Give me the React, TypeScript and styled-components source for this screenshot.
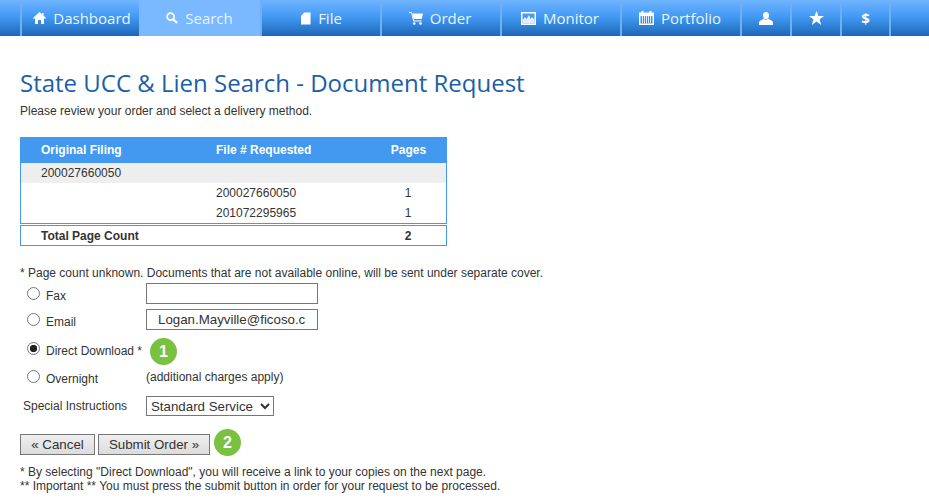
import { ReactNode } from "react";
import styled, { createGlobalStyle } from "styled-components";

const GlobalStyle = createGlobalStyle`
  html, body {
    margin: 0;
    padding: 0;
    background: #fff;
    font-family: "Liberation Sans", Arial, sans-serif;
    font-size: 12px;
    color: #333;
  }
`;

const NavBar = styled.nav`
  display: flex;
  height: 36px;
  padding-left: 20px;
  background: linear-gradient(#6fb4ff 0%, #449af5 45%, #1c68b6 100%);
`;

const NavItem = styled.div<{ $w: number; $pad?: number; $active?: boolean; $text?: boolean }>`
  width: ${p => p.$w}px;
  box-sizing: border-box;
  display: flex;
  align-items: center;
  justify-content: center;
  gap: 7px;
  padding-left: ${p => p.$pad ?? 0}px;
  padding-right: ${p => (p.$text ? 2 : 0)}px;
  border-left: 2px solid ${p => (p.$active ? "#7ab8ff" : "#6fb0f5")};
  background: ${p => (p.$active ? "#7ab8ff" : "transparent")};
  color: ${p => (p.$active ? "#e8f3ff" : "#eaf4ff")};
  font-family: "Open Sans", sans-serif;
  font-size: 15px;
`;

const DollarGlyph = styled.span`
  font-weight: 700;
  font-size: 15px;
  color: #fff;
`;

const Content = styled.main`
  padding: 34px 0 0 20px;
`;

const Title = styled.h1`
  margin: 0;
  font-family: "Open Sans", sans-serif;
  font-weight: 400;
  font-size: 24px;
  line-height: 26px;
  color: #1a5fa8;
`;

const Intro = styled.p`
  margin: 8px 0 0;
  line-height: 14px;
`;

const Table = styled.div`
  margin-top: 19px;
  width: 427px;
`;

const TableBody = styled.div`
  border: 1px solid #4398ef;
  border-top: none;
`;

const Row = styled.div<{ $h?: number; $bg?: string; $color?: string; $bold?: boolean }>`
  display: grid;
  grid-template-columns: 195px 160px 1fr;
  align-items: center;
  height: ${p => p.$h ?? 20}px;
  background: ${p => p.$bg ?? "transparent"};
  color: ${p => p.$color ?? "#333"};
  font-weight: ${p => (p.$bold ? 700 : 400)};
`;

const HeadRow = styled(Row)`
  box-sizing: border-box;
  padding-left: 1px;
`;

const Cell = styled.div`
  padding-left: 20px;
  &:nth-child(2) {
    padding-left: 0;
  }
`;

const PagesCell = styled.div`
  padding-right: 6px;
  text-align: center;
`;

const TotalBox = styled.div`
  margin-top: 1px;
  border: 1px solid #4398ef;
`;

const Note = styled.p`
  margin: 20px 0 0;
  line-height: 14px;
`;

const Options = styled.div`
  margin-top: 2px;
`;

const OptionRow = styled.div<{ $h: number }>`
  display: flex;
  align-items: center;
  height: ${p => p.$h}px;
`;

const OptionLabel = styled.label`
  display: flex;
  align-items: center;
  width: 126px;
  flex-shrink: 0;
  padding: 2px 0 0 7px;
  box-sizing: border-box;
`;

const Radio = styled.input.attrs({ type: "radio" })`
  appearance: none;
  width: 13px;
  height: 13px;
  margin: -5px 6px 0 0;
  border: 1px solid #767676;
  border-radius: 50%;
  background: #fff;
  &:checked {
    background: radial-gradient(circle, #222 0 3.4px, #fff 4px);
  }
`;

const TextField = styled.input`
  width: 172px;
  height: 21px;
  margin-top: -3px;
  box-sizing: border-box;
  border: 1px solid #767676;
  padding: 0 12px 0 11px;
  font-family: "Liberation Sans", Arial, sans-serif;
  font-size: 13.3px;
  color: #333;
`;

const ChargesNote = styled.span`
  margin-top: -2px;
`;

const Step = styled.span`
  display: inline-flex;
  align-items: center;
  justify-content: center;
  width: 27px;
  height: 27px;
  border-radius: 50%;
  background: #7ac142;
  color: #fff;
  font-weight: 700;
  font-size: 16px;
`;

const DirectStep = styled(Step)`
  margin: 3px 0 0 4px;
`;

const SubmitStep = styled(Step)`
  margin: -4px 0 0 1px;
`;

const InstructionsRow = styled.div`
  display: flex;
  align-items: center;
  height: 20px;
  margin-top: 6px;
  padding-left: 3px;
`;

const InstructionsLabel = styled.span`
  width: 123px;
`;

const ServiceSelect = styled.select`
  width: 128px;
  height: 20px;
  padding: 0;
  font-family: "Liberation Sans", Arial, sans-serif;
  font-size: 13.3px;
  color: #333;
  background: #fff;
  border: 1px solid #767676;
`;

const Actions = styled.div`
  display: flex;
  align-items: center;
  gap: 3px;
  height: 21px;
  margin-top: 18px;
`;

const Button = styled.button<{ $w: number }>`
  width: ${p => p.$w}px;
  height: 21px;
  box-sizing: border-box;
  padding: 0;
  border: 1px solid #767676;
  background: linear-gradient(#efefef, #dcdcdc);
  font-family: "Liberation Sans", Arial, sans-serif;
  font-size: 13.3px;
  color: #333;
`;

const Footnotes = styled.p`
  margin: 10px 0 0;
  line-height: 14px;
`;

const HomeIcon = () => (
  <svg width="13" height="12" viewBox="0 0 13 12">
    <path fill="#fff" d="M6.5 0L0 6l.9 1 1.1-1v6h3V8h3v4h3V6l1.1 1 .9-1-2.4-2.2V1H9v1.2z" />
  </svg>
);

const SearchIcon = () => (
  <svg width="12" height="12" viewBox="0 0 13 13">
    <circle cx="5" cy="5" r="3.8" fill="none" stroke="#fff" strokeWidth="1.8" />
    <path stroke="#fff" strokeWidth="2.2" d="M7.8 7.8l4.2 4.2" />
  </svg>
);

const FileIcon = () => (
  <svg width="10" height="13" viewBox="0 0 11 13">
    <path fill="#fff" d="M3.5 0H10.5V13H0V3.5z" />
  </svg>
);

const CartIcon = () => (
  <svg width="14" height="13" viewBox="0 0 14 13">
    <path fill="#fff" d="M3.5 1.5H14L12.7 7H4.6z" />
    <path fill="none" stroke="#fff" d="M0 .5h2.6l2 8.5h8" />
    <circle cx="5.2" cy="11.5" r="1.3" fill="#fff" />
    <circle cx="11.5" cy="11.5" r="1.3" fill="#fff" />
  </svg>
);

const MonitorIcon = () => (
  <svg width="15" height="13" viewBox="0 0 15 13">
    <path fill="#fff" fillRule="evenodd" d="M0 0h15v13H0zM1.5 1.5v10h12v-10z" />
    <path fill="#fff" d="M1.5 8L4 5l1.5 2L8 3l1.5 4 1.5-2 2.5 2.5v4h-12z" opacity=".85" />
  </svg>
);

const CalendarIcon = () => (
  <svg width="15" height="14" viewBox="0 0 15 14">
    <path fill="#fff" fillRule="evenodd" d="M0 1.5h2.5V0h2v1.5h6V0h2v1.5H15V14H0zM1.5 5v7.5h12V5z" />
    <path stroke="#fff" strokeOpacity=".8" d="M3.5 5v7.5M5.5 5v7.5M7.5 5v7.5M9.5 5v7.5M11.5 5v7.5" />
  </svg>
);

const UserIcon = () => (
  <svg width="14" height="13" viewBox="0 0 14 13">
    <ellipse cx="7" cy="3.6" rx="3" ry="3.6" fill="#fff" />
    <path fill="#fff" d="M4.8 6.8C3 8 .6 8.2 0 10.2V13h14v-2.8c-.6-2-3-2.2-4.8-3.4C8 8 6 8 4.8 6.8z" />
  </svg>
);

const StarIcon = () => (
  <svg width="15" height="14" viewBox="0 0 15 14">
    <path fill="#fff" d="M7.5 0l2 5h5.5l-4.4 3.3L12.2 14 7.5 10.6 2.8 14l1.6-5.7L0 5h5.5z" />
  </svg>
);

const navItems: { w: number; pad?: number; icon?: ReactNode; label?: string; active?: boolean }[] = [
  { w: 119, pad: 5, icon: <HomeIcon />, label: "Dashboard" },
  { w: 121, icon: <SearchIcon />, label: "Search", active: true },
  { w: 120, pad: 3, icon: <FileIcon />, label: "File" },
  { w: 120, icon: <CartIcon />, label: "Order" },
  { w: 120, icon: <MonitorIcon />, label: "Monitor" },
  { w: 120, icon: <CalendarIcon />, label: "Portfolio" },
  { w: 50, icon: <UserIcon /> },
  { w: 50, icon: <StarIcon /> },
  { w: 49, icon: <DollarGlyph>$</DollarGlyph> },
  { w: 40 },
];

export default function App() {
  return (
    <>
      <GlobalStyle />
      <NavBar>
        {navItems.map((item, i) => (
          <NavItem key={i} $w={item.w} $pad={item.pad} $active={item.active} $text={!!item.label}>
            {item.icon}
            {item.label && <span>{item.label}</span>}
          </NavItem>
        ))}
      </NavBar>
      <Content>
        <Title>State UCC &amp; Lien Search - Document Request</Title>
        <Intro>Please review your order and select a delivery method.</Intro>
        <Table>
          <HeadRow $h={26} $bg="#4398ef" $color="#fff" $bold>
            <Cell>Original Filing</Cell>
            <Cell>File # Requested</Cell>
            <PagesCell>Pages</PagesCell>
          </HeadRow>
          <TableBody>
            <Row $bg="#eeeeee">
              <Cell>200027660050</Cell>
            </Row>
            <Row>
              <Cell />
              <Cell>200027660050</Cell>
              <PagesCell>1</PagesCell>
            </Row>
            <Row>
              <Cell />
              <Cell>201072295965</Cell>
              <PagesCell>1</PagesCell>
            </Row>
          </TableBody>
          <TotalBox>
            <Row $h={19} $bold>
              <Cell>Total Page Count</Cell>
              <Cell />
              <PagesCell>2</PagesCell>
            </Row>
          </TotalBox>
        </Table>
        <Note>* Page count unknown. Documents that are not available online, will be sent under separate cover.</Note>
        <Options>
          <OptionRow $h={26}>
            <OptionLabel>
              <Radio name="delivery" />
              Fax
            </OptionLabel>
            <TextField />
          </OptionRow>
          <OptionRow $h={26}>
            <OptionLabel>
              <Radio name="delivery" />
              Email
            </OptionLabel>
            <TextField defaultValue="Logan.Mayville@ficoso.com" />
          </OptionRow>
          <OptionRow $h={32}>
            <OptionLabel>
              <Radio name="delivery" defaultChecked />
              Direct Download *
            </OptionLabel>
            <DirectStep>1</DirectStep>
          </OptionRow>
          <OptionRow $h={24}>
            <OptionLabel>
              <Radio name="delivery" />
              Overnight
            </OptionLabel>
            <ChargesNote>(additional charges apply)</ChargesNote>
          </OptionRow>
        </Options>
        <InstructionsRow>
          <InstructionsLabel>Special Instructions</InstructionsLabel>
          <ServiceSelect defaultValue="Standard Service">
            <option>Standard Service</option>
          </ServiceSelect>
        </InstructionsRow>
        <Actions>
          <Button $w={75}>« Cancel</Button>
          <Button $w={112}>Submit Order »</Button>
          <SubmitStep>2</SubmitStep>
        </Actions>
        <Footnotes>
          * By selecting "Direct Download", you will receive a link to your copies on the next page.
          <br />
          ** Important ** You must press the submit button in order for your request to be processed.
        </Footnotes>
      </Content>
    </>
  );
}
